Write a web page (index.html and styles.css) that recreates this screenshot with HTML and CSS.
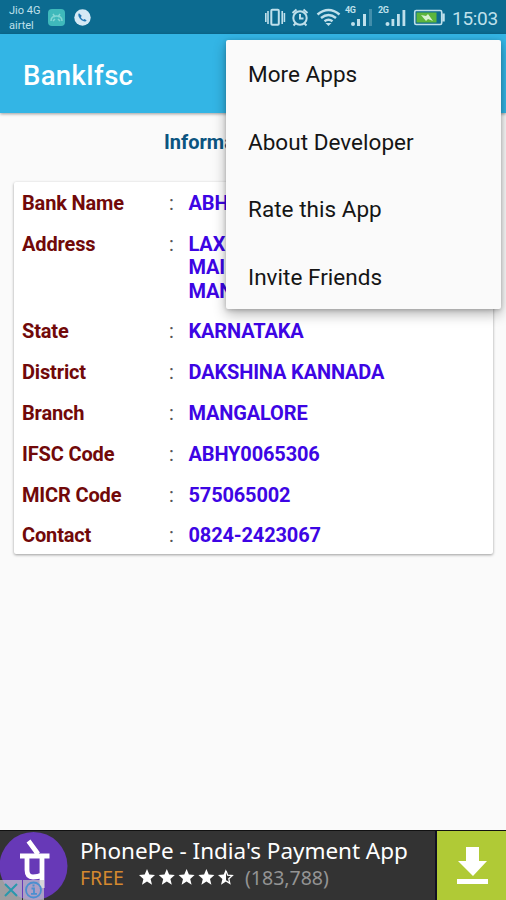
FILE: index.html
```html
<!DOCTYPE html>
<html lang="en">
<head>
<meta charset="utf-8">
<title>BankIfsc</title>
<link rel="stylesheet" href="styles.css">
</head>
<body>
<div class="screen">
  <header class="status">
    <div class="carriers"><span>Jio 4G</span><span>airtel</span></div>
    <svg class="note" width="17" height="17" viewBox="0 0 17 17"><rect width="17" height="17" rx="4" fill="#3fb9bb"/><path d="M3 12c0-3 2-5 5.500-5s5.500 2 5.500 5M5 5l2 3M12 5l-2 3M5 12l2-2M12 12l-2-2" fill="none" stroke="#83d7d5" stroke-width="1.500"/></svg>
    <svg class="note" width="17" height="17" viewBox="0 0 17 17"><circle cx="8.500" cy="8.500" r="8.200" fill="#d5e9f5"/><path d="M5 4.300c-1.400 1-.5 4 1.500 6s4.800 3 6.200 1.500l-1.900-1.900-1.500.8c-1-.5-1.900-1.400-2.400-2.500l.8-1.400z" fill="#2478b5"/></svg>
    <svg class="system" width="184" height="28" viewBox="0 0 184 28" fill="none" stroke="#bfe0eb" stroke-width="1.600">
      <rect x="6.300" y="9.800" width="7.500" height="15" rx="1" stroke-width="2"/>
      <path d="M3 11v13M17.200 11v13M.8 13v9M19.400 13v9"/>
      <g stroke-width="2"><circle cx="35" cy="18" r="6.700"/><path d="M35 14v4.500h3.500M27.500 13l4-3.500M42.500 13l-4-3.500M30.500 23.500l-2 2M39.500 23.500l2 2"/></g>
      <path d="M52.500 14.500q11-9 22 0M56 18q7.500-6 15 0M59.500 21.300q4-3 8 0" stroke-width="2.500"/><path d="M60.500 23h6l-3 3z" fill="#bfe0eb" stroke="none"/>
      <g fill="#bfe0eb" stroke="none"><circle cx="88" cy="24" r="2"/><path d="M92 19h3v7h-3zM98 14h3v12h-3z"/><path opacity=".3" d="M104 9h3v17h-3z"/><circle cx="122.500" cy="24" r="2"/><path d="M126.500 19h2.800v7h-2.800zM132 14h2.800v12H132zM137.500 10h2.800v16h-2.800z"/></g>
      <rect x="149.700" y="10.500" width="27" height="14" rx="1.500"/><rect x="151.500" y="12.500" width="20" height="10" fill="#5cb53c" stroke="none"/><path d="M178.500 13.500v8" stroke-width="2.500"/><path d="M156 15l5 1 2-2 5 7-5-2-2 2z" fill="#d7f1d1" stroke="none"/>
      <text x="80" y="13" class="network">4G</text><text x="113" y="13" class="network">2G</text>
    </svg>
    <span class="clock">15:03</span>
  </header>
  <div class="appbar">BankIfsc</div>
  <main>
    <h1>Informa</h1>
    <section class="card">
      <div class="row"><b>Bank Name</b><i>:</i><strong>ABH</strong></div>
      <div class="row"><b>Address</b><i>:</i><strong>LAX<br>MAI<br>MAN</strong></div>
      <div class="row"><b>State</b><i>:</i><strong>KARNATAKA</strong></div>
      <div class="row"><b>District</b><i>:</i><strong>DAKSHINA KANNADA</strong></div>
      <div class="row"><b>Branch</b><i>:</i><strong>MANGALORE</strong></div>
      <div class="row"><b>IFSC Code</b><i>:</i><strong>ABHY0065306</strong></div>
      <div class="row"><b>MICR Code</b><i>:</i><strong>575065002</strong></div>
      <div class="row"><b>Contact</b><i>:</i><strong>0824-2423067</strong></div>
    </section>
  </main>
  <footer class="ad">
    <svg class="brand" width="70" height="70" viewBox="0 0 70 70">
      <circle cx="33.500" cy="35" r="34" fill="#6739b7"/>
      <path d="M20 25h29.500M42 25v32M27 26v13q0 7 6 7 5 0 9-2M28.500 10l9.500 13" fill="none" stroke="#fff" stroke-width="4.800"/>
      <path d="M0 49h22v21H0zM23 49h21v21H23z" fill="#c6c6ca" opacity=".72"/>
      <path d="M5 53l12 12M17 53L5 65" stroke="#2998ac" stroke-width="2"/>
      <circle cx="33.500" cy="59" r="7.500" fill="none" stroke="#4a8fd0" stroke-width="1.800"/>
      <path d="M31.500 57.500h2.500v5M31 62.800h6M32.500 54.500h2" fill="none" stroke="#4a8fd0" stroke-width="1.800"/>
    </svg>
    <div class="copy">
      <div class="ad-title">PhonePe - India's Payment App</div>
      <div class="ad-meta"><span class="free">FREE</span>
        <svg class="stars" width="98" height="18" viewBox="0 0 98 18">
          <defs><path id="star" d="M8 0l2.300 5.500 5.700.5-4.400 3.900 1.400 5.800L8 12.600 3 15.700l1.400-5.800L0 6l5.700-.5z"/></defs>
          <g fill="#fff"><use href="#star"/><use href="#star" x="19.800"/><use href="#star" x="39.600"/><use href="#star" x="59.400"/></g>
          <path d="M87 1.700l1.700 4.500 4.600.4-3.500 3.200 1 4.500-3.800-2.400" fill="none" stroke="#fff" stroke-width="1.300"/><path d="M87 0v12.600l-5 3.100 1.400-5.800L79 6l5.700-.5z" fill="#fff"/>
        </svg>
        <span class="count">(183,788)</span></div>
    </div>
    <div class="download"><svg width="32" height="40" viewBox="0 0 32 40"><path d="M9 0h13v14h8L16 29 1 14h8zM0 32h31v5H0z" fill="#fff"/></svg></div>
  </footer>
  <nav class="menu"><span>More Apps</span><span>About Developer</span><span>Rate this App</span><span>Invite Friends</span></nav>
</div>
</body>
</html>
```
FILE: styles.css
```css
* { box-sizing: border-box; }
body { margin: 0; font-family: Roboto, "Liberation Sans", sans-serif; }
.screen { position: relative; width: 506px; height: 900px; display: flex; flex-direction: column; background: #fafafa; overflow: hidden; }
.status { height: 34px; flex: none; display: flex; background: #0c6b90; color: #bfe0eb; padding-left: 9px; }
.carriers { width: 39px; display: flex; flex-direction: column; font-size: 11px; line-height: 15px; padding-top: 3px; white-space: nowrap; }
.note { margin: 9px 9px 0 0; flex: none; }
.system { margin-left: 165px; flex: none; }
.network { font-size: 9px; font-weight: 700; letter-spacing: -.5px; fill: #bfe0eb; stroke: none; }
.clock { font-size: 19px; line-height: 37px; margin-left: 3px; letter-spacing: -.3px; }
.appbar { height: 79px; flex: none; padding-left: 23px; background: #33b5e5; color: #fff; font-size: 27.5px; font-weight: 500; letter-spacing: .3px; line-height: 84px; box-shadow: 0 1px 3px rgba(0,0,0,.38); z-index: 1; }
main { flex: 1; padding: 0 13px 0 14px; }
h1 { margin: 17px 0 0 150px; font-size: 20px; font-weight: 700; line-height: 24px; height: 52px; color: #0b5480; }
.card { height: 372px; background: #fff; border-radius: 2px; box-shadow: 0 1px 3px rgba(0,0,0,.38); padding: 10px 8px 8px; display: flex; flex-direction: column; gap: 17.4px; font-size: 20px; letter-spacing: -.15px; line-height: 23.4px; }
.row { display: grid; grid-template-columns: 147px 19.5px 1fr; }
.row b { color: #710909; }
.row i { font-style: normal; color: #555; }
.row strong { color: #3d05e4; }
.ad { height: 70px; flex: none; display: flex; background: #333; border-top: 1px solid #111; font-family: "Noto Sans", sans-serif; }
.brand { flex: none; }
.copy { width: 367px; padding-left: 10px; border-right: 2px solid #111122; white-space: nowrap; }
.ad-title { color: #fff; font-size: 22.5px; letter-spacing: -.04px; line-height: 32px; padding-top: 4px; height: 34px; }
.ad-meta { display: flex; height: 26px; line-height: 26px; font-size: 19.5px; }
.free { color: #d5892f; width: 59px; }
.stars { margin-top: 4px; }
.count { color: #949494; margin-left: 8px; }
.download { flex: 1; background: #b0ca36; padding: 16px 0 0 20px; }
.menu { position: absolute; z-index: 2; left: 226px; top: 40px; width: 275px; height: 269px; background: #fafafa; border-radius: 2px; box-shadow: 0 5px 13px rgba(0,0,0,.3), 0 1px 4px rgba(0,0,0,.2); display: flex; flex-direction: column; padding: 1px 0 0 22px; font-size: 22.5px; line-height: 67.5px; letter-spacing: .03px; color: #151515; }
```
